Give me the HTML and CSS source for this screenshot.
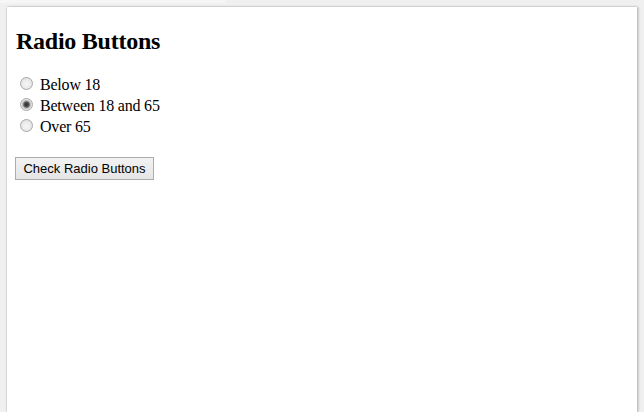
FILE: index.html
```html
<!DOCTYPE html>
<html>
<head>
<meta charset="utf-8">
<title>Radio Buttons</title>
<link rel="stylesheet" href="styles.css">
</head>
<body>
<div class="tab-strip"></div>
<div class="panel">
  <h2 class="title">Radio Buttons</h2>
  <form class="form">
    <label class="row"><input class="radio" type="radio" name="age" value="below18"><span>Below 18</span></label>
    <label class="row"><input class="radio" type="radio" name="age" value="between" checked><span>Between 18 and 65</span></label>
    <label class="row"><input class="radio" type="radio" name="age" value="over65"><span>Over 65</span></label>
    <div class="actions"><button class="btn" type="button">Check Radio Buttons</button></div>
  </form>
</div>
</body>
</html>
```

FILE: styles.css
```css
html, body {
  margin: 0;
  padding: 0;
  height: 100%;
}
body {
  background: #f0f0f0;
  font-family: "Liberation Serif", "Times New Roman", serif;
  font-size: 16px;
  color: #000;
  overflow: hidden;
}
.tab-strip {
  width: 225px;
  height: 3px;
  background: #f6f6f6;
}
.panel {
  margin: 4px 0 0 7px;
  width: 630px;
  height: calc(100% - 7px);
  background: #fff;
  box-shadow: 0 0 2px rgba(0, 0, 0, 0.3), 2px 0 2px rgba(0, 0, 0, 0.12);
  padding: 0 0 0 9px;
  box-sizing: border-box;
  display: flow-root;
}
.title {
  margin: 20px 0 18px 0;
  font-size: 24px;
  line-height: 28px;
  font-weight: bold;
  letter-spacing: -0.25px;
}
.form {
  margin: 0;
}
.row {
  display: flex;
  align-items: center;
  height: 21px;
  letter-spacing: -0.2px;
}
.row span {
  position: relative;
  top: 1px;
}
.radio {
  -webkit-appearance: none;
  appearance: none;
  width: 13px;
  height: 13px;
  margin: 0 7px 0 4px;
  border: 1px solid #a9a9a9;
  border-radius: 50%;
  box-sizing: border-box;
  background: radial-gradient(circle at 50% 55%, #f6f6f6 0%, #ececec 45%, #d6d6d6 100%);
  flex: none;
}
.radio:checked {
  background: radial-gradient(circle at 50% 50%, #333 0, #444 2px, #7a7a7a 3px, #bdbdbd 4px, #e4e4e4 5px, #d4d4d4 100%);
}
.actions {
  margin-top: 21px;
}
.btn {
  font-family: "Liberation Sans", Arial, sans-serif;
  font-size: 13px;
  height: 23px;
  width: 139px;
  padding: 0;
  margin: 0 0 0 -1px;
  border: 1px solid #acacac;
  border-radius: 0;
  background: linear-gradient(#f2f2f2, #e5e5e5);
  color: #000;
  line-height: 21px;
  text-align: center;
}
```
